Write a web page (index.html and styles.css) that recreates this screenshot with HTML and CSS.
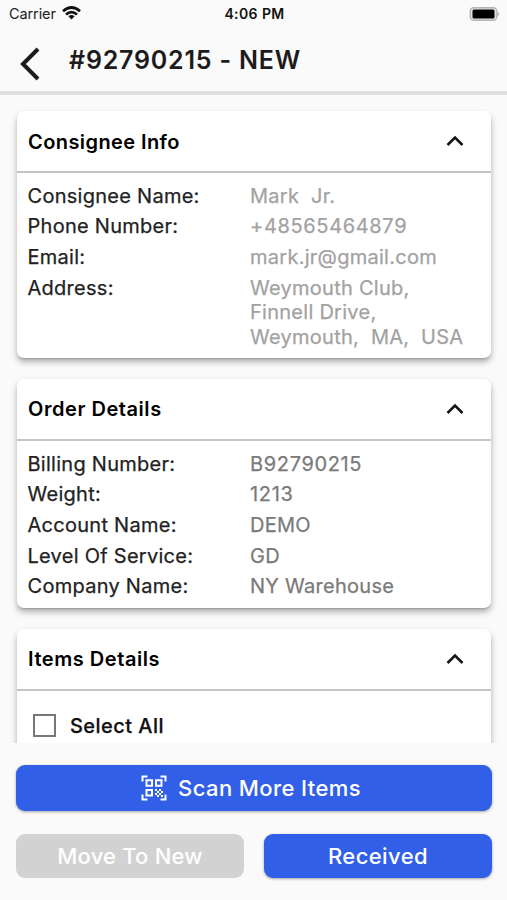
FILE: index.html
```html
<!DOCTYPE html>
<html lang="en">
<head>
<meta charset="utf-8">
<title>Order #92790215</title>
<link rel="stylesheet" href="styles.css">
</head>
<body>
<div class="screen">
  <div class="status">
    <div class="carrier"><span>Carrier</span>
      <svg class="wifi" width="19" height="14" viewBox="0 0 19 14" fill="none" stroke="#111" stroke-width="2.7"><path d="M1 5.2Q9.5-2.2 18 5.2"/><path d="M4 8.5Q9.500 3.700 15 8.500"/><path d="M6.400 10.200Q9.500 7.700 12.600 10.200L9.500 13.400Z" fill="#111" stroke="none"/></svg>
    </div>
    <span class="clock">4:06 PM</span>
    <svg class="battery" width="31" height="14" viewBox="0 0 31 14"><rect x="1.200" y=".7" width="26.600" height="12.600" rx="3.500" fill="#e2e2e2" stroke="#b5b5b5" stroke-width="1.400"/><rect x="3.500" y="2.500" width="22" height="9" rx="1.500" fill="#000"/><path d="M28.500 4.500Q32 7 28.500 9.500Z" fill="#b5b5b5"/></svg>
  </div>
  <header class="topbar">
    <svg class="back" width="20" height="34" viewBox="0 0 20 34" fill="none" stroke="#1c1c1c" stroke-width="4"><path d="M18 2L3 17L18 32"/></svg>
    <h1>#92790215 - NEW</h1>
  </header>
  <main class="content">
    <section class="card">
      <div class="card-head"><h2 class="wide-title">Consignee Info</h2><svg class="chevron" width="18" height="12" viewBox="0 0 18 12"><path d="M1.500 10L9 2.500L16.500 10"/></svg></div>
      <dl class="rows light">
        <div><dt>Consignee Name:</dt><dd>Mark  Jr.</dd></div>
        <div><dt>Phone Number:</dt><dd class="digits">+48565464879</dd></div>
        <div><dt>Email:</dt><dd>mark.jr@gmail.com</dd></div>
        <div><dt>Address:</dt><dd>Weymouth Club,
Finnell Drive,
Weymouth,  MA,  USA</dd></div>
      </dl>
    </section>
    <section class="card">
      <div class="card-head"><h2>Order Details</h2><svg class="chevron" width="18" height="12" viewBox="0 0 18 12"><path d="M1.500 10L9 2.500L16.500 10"/></svg></div>
      <dl class="rows order">
        <div><dt>Billing Number:</dt><dd class="digits">B92790215</dd></div>
        <div><dt>Weight:</dt><dd class="digits">1213</dd></div>
        <div><dt>Account Name:</dt><dd>DEMO</dd></div>
        <div><dt>Level Of Service:</dt><dd>GD</dd></div>
        <div><dt>Company Name:</dt><dd>NY Warehouse</dd></div>
      </dl>
    </section>
    <section class="card">
      <div class="card-head"><h2>Items Details</h2><svg class="chevron" width="18" height="12" viewBox="0 0 18 12"><path d="M1.500 10L9 2.500L16.500 10"/></svg></div>
      <label class="select"><span class="box"></span>Select All</label>
    </section>
  </main>
  <footer class="actions">
    <button class="btn scan">
      <svg width="26" height="26" viewBox="0 0 26 26" fill="none" stroke="#fff" stroke-width="2"><path d="M1.500 6.500V1.500H6.500M19.500 1.500H24.500V6.500M1.500 19.500V24.500H6.500M19.500 24.500H24.500V19.500"/><path d="M5.500 5.200h5.500v5.500h-5.500zM15 5.200h5.500v5.500h-5.500zM5.500 15h5.500v5.500h-5.500z"/><path d="M14 14h2v2h-2zM18 14h2v2h-2zM16 16h2v2h-2zM20 16h2v2h-2zM14 18h2v2h-2zM18 18h2v2h-2zM16 20h2v2h-2zM20 20h2v2h-2z" fill="#fff" stroke="none"/></svg>
      <span>Scan More Items</span>
    </button>
    <div class="pair"><button class="btn disabled">Move To New</button><button class="btn">Received</button></div>
  </footer>
</div>
</body>
</html>
```
FILE: styles.css
```css
* { box-sizing: border-box; }
body { margin: 0; background: #fafafa; font-family: Inter, "Liberation Sans", sans-serif; color: #222; }
h1, h2, dl, dd { margin: 0; }
.screen { height: 900px; display: flex; flex-direction: column; overflow: hidden; }
.status { flex: none; height: 27px; padding: 0 7px 0 9px; display: grid; grid-template-columns: 1fr auto 1fr; align-items: center; font-size: 14.5px; }
.carrier { display: flex; align-items: center; gap: 6px; letter-spacing: -.1px; }
.wifi { margin-top: -2px; }
.clock { font-weight: 600; font-size: 14px; letter-spacing: .4px; color: #111; }
.battery { justify-self: end; }
.topbar { flex: none; height: 68px; padding: 0 20px; display: flex; align-items: flex-start; gap: 29px; border-bottom: 4px solid #e0e0e0; }
.back { margin-top: 20px; }
h1 { margin-top: 16px; font-size: 25px; line-height: 34px; font-weight: 600; letter-spacing: .8px; color: #1c1c1c; }
.content { flex: none; height: 648px; padding: 16px 16px 0 17px; overflow: hidden; display: flex; flex-direction: column; gap: 20.500px; }
.card { flex: none; background: #fff; border-radius: 7px; box-shadow: 0 4px 6px rgba(0,0,0,.3), 0 2px 2px -1px rgba(0,0,0,.16); }
.card-head { height: 62px; padding: 1px 27px 0 11px; display: flex; align-items: center; justify-content: space-between; border-bottom: 2px solid #c4c6c5; }
h2 { font-size: 20px; font-weight: 600; line-height: 24px; letter-spacing: .55px; color: #000; }
.wide-title { letter-spacing: .42px; }
.chevron { margin-top: -1px; fill: none; stroke: #151515; stroke-width: 2.6; }
.rows { padding: 10.700px 11px 8.800px; display: grid; gap: 6.200px; font-size: 20px; font-weight: 400; line-height: 24.500px; letter-spacing: .27px; -webkit-text-stroke: .25px currentColor; }
.order { padding-top: 11.200px; padding-bottom: 9.500px; }
.rows > div { display: grid; grid-template-columns: 222px 1fr; }
dt { margin-left: -.5px; }
dd { white-space: pre; color: #7a7a7a; }
.digits { letter-spacing: .65px; }
.light dd { color: #a2a2a2; }
.select { height: 90px; padding: 23px 16px; display: flex; gap: 14px; font-size: 20px; line-height: 24px; font-weight: 500; letter-spacing: .45px; color: #111; -webkit-text-stroke: .25px currentColor; }
.box { width: 23px; height: 23px; border: 2px solid #777; }
.actions { flex: none; padding: 22px 15px 0 16px; display: grid; gap: 23px; }
.pair { display: grid; grid-template-columns: 1fr 1fr; gap: 20px; }
.btn { height: 44px; padding: 0; border: 0; border-radius: 9px; display: flex; align-items: center; justify-content: center; background: #325fe8; color: #fff; font: 500 22px/28px Inter, "Liberation Sans", sans-serif; letter-spacing: .4px; box-shadow: 0 1px 3px rgba(0,0,0,.35); }
.scan { height: 46px; gap: 11px; padding-right: 6px; }
.disabled { background: #d2d2d2; box-shadow: none; letter-spacing: .2px; }
```
